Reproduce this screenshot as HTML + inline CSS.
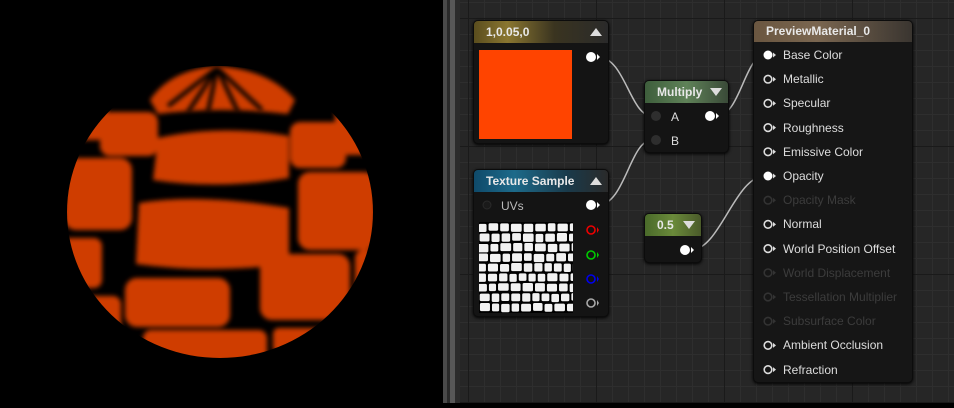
<!DOCTYPE html>
<html><head><meta charset="utf-8"><style>
*{margin:0;padding:0;box-sizing:border-box}
body{width:954px;height:403px;overflow:hidden;background:#000;font-family:"Liberation Sans",sans-serif;position:relative}
#vp{position:absolute;left:0;top:0;width:443px;height:403px;background:#000}
#div1{position:absolute;left:443px;top:0;width:4px;height:403px;background:#4a4a4a}
#div2{position:absolute;left:447px;top:0;width:3px;height:403px;background:#2a2a2a}
#div3{position:absolute;left:450px;top:0;width:5px;height:403px;background:#585858}
#div4{position:absolute;left:455px;top:0;width:5px;height:403px;background:#2c2c2c}
#graph{position:absolute;left:460px;top:0;width:494px;height:403px;background-color:#262626;
background-image:linear-gradient(#1a1a1a 1px,transparent 1px),linear-gradient(90deg,#1a1a1a 1px,transparent 1px),linear-gradient(#2e2e2e 1px,transparent 1px),linear-gradient(90deg,#2e2e2e 1px,transparent 1px);
background-size:128px 128px,128px 128px,16px 16px,16px 16px;background-position:0 18px,8px 0,0 2px,8px 0}
.node{position:absolute;background:#141414;border-radius:5px;box-shadow:0 1px 3px #000;border:1px solid #0c0c0c}
.hd{height:22px;border-radius:4px 4px 0 0;color:#e8e8e8;font-weight:bold;font-size:12px;line-height:22px;padding-left:12px;position:relative}
.tri{position:absolute;right:6px;top:7px;width:0;height:0;border-left:6px solid transparent;border-right:6px solid transparent}
.up{border-bottom:8px solid #ddd}
.dn{border-top:8px solid #ddd}
.lbl{position:absolute;font-size:12px;color:#ddd;line-height:14px;white-space:nowrap}
.dim{color:#3c3c3c}
</style></head><body>
<div id="vp">
<svg width="443" height="403">
<defs>
<clipPath id="sp"><ellipse cx="220" cy="212" rx="153" ry="146"/></clipPath>
<filter id="bl" filterUnits="userSpaceOnUse" x="0" y="0" width="443" height="403"><feGaussianBlur stdDeviation="2.5"/></filter>
</defs>
<ellipse cx="220" cy="212" rx="153" ry="146" fill="#000"/>
<g clip-path="url(#sp)">
<g filter="url(#bl)" fill="#cf3d00">
<path d="M150 100 Q170 70 217 66 Q270 70 295 100 L288 114 Q220 106 158 114Z"/>
<rect x="100" y="112" width="58" height="44" rx="10"/>
<rect x="62" y="95" width="45" height="45" rx="10"/>
<rect x="290" y="122" width="56" height="46" rx="10"/>
<rect x="335" y="105" width="45" height="50" rx="10"/>
<path d="M158 138 Q220 124 289 136 L289 178 Q220 190 153 180Z" />
<rect x="64" y="158" width="68" height="72" rx="12"/>
<path d="M139 203 Q200 193 289 208 L289 264 Q210 274 136 264Z"/>
<rect x="298" y="172" width="78" height="78" rx="12"/>
<rect x="62" y="238" width="40" height="50" rx="8"/>
<rect x="125" y="278" width="105" height="49" rx="12"/>
<rect x="260" y="254" width="90" height="66" rx="12"/>
<rect x="355" y="250" width="25" height="50" rx="8"/>
<rect x="143" y="330" width="124" height="32" rx="8"/>
<rect x="273" y="328" width="70" height="25" rx="6"/>
<rect x="73" y="296" width="48" height="38" rx="8"/>
</g>
<g stroke="#000" stroke-width="4" filter="url(#bl)">
<path d="M217 68 L188 112 M217 68 L208 112 M217 68 L238 112 M217 68 L262 110 M217 68 L168 106"/>
</g>
</g>
</svg>
</div>
<div id="div1"></div><div id="div2"></div><div id="div3"></div><div id="div4"></div>
<div id="graph"></div>

<svg style="position:absolute;left:0;top:0" width="954" height="403">
<g stroke="#bbb" stroke-width="1.5" fill="none">
<path d="M598 57 C625 57 630 116 652 116"/>
<path d="M598 205 C625 205 630 140 652 140"/>
<path d="M717 116 C740 116 745 55 765 55"/>
<path d="M691 250 C720 250 735 176 765 176"/>
</g>
</svg>

<div class="node" style="left:473px;top:20px;width:136px;height:124px">
<div class="hd" style="background:linear-gradient(90deg,#5a4d1e,#8a7630 25%,#3a3420 60%,#2a2a2a)">1,0.05,0<div class="tri up"></div></div>
<div style="position:absolute;left:5px;top:29px;width:93px;height:89px;background:#ff4400"></div>
</div>
<div class="node" style="left:473px;top:169px;width:136px;height:148px">
<div class="hd" style="background:linear-gradient(90deg,#0f4a6a,#1d6a8a 30%,#1a3a4a 70%,#2a2a2a)">Texture Sample<div class="tri up"></div></div>
<div class="lbl" style="left:27px;top:29px;color:#bbb">UVs</div>
<svg style="position:absolute;left:5px;top:52px" width="94" height="91" id="tex"></svg>
</div>
<div class="node" style="left:644px;top:80px;width:85px;height:73px">
<div class="hd" style="background:linear-gradient(90deg,#3e5e3c,#5f8258 50%,#3a4a38)">Multiply<div class="tri dn"></div></div>
<div class="lbl" style="left:26px;top:29px">A</div>
<div class="lbl" style="left:26px;top:53px">B</div>
</div>
<div class="node" style="left:644px;top:213px;width:58px;height:50px">
<div class="hd" style="background:linear-gradient(90deg,#4a6a2a,#6a8a3a 50%,#4a5a2a)">0.5<div class="tri dn"></div></div>
</div>
<div class="node" style="left:753px;top:20px;width:160px;height:363px;background:#161616">
<div class="hd" style="background:linear-gradient(90deg,#6a5640,#7a6650 40%,#3a3530);height:21px;line-height:21px">PreviewMaterial_0</div>
</div>
<div id="labels"></div>

<svg style="position:absolute;left:0;top:0" width="954" height="403" id="pins">
<g fill="#fff">
<circle cx="591" cy="57" r="5"/><path d="M597 54 L600 57 L597 60Z"/>
<circle cx="591" cy="205" r="5"/><path d="M597 202 L600 205 L597 208Z"/>
<circle cx="710" cy="116" r="5"/><path d="M716 113 L719 116 L716 119Z"/>
<circle cx="685" cy="250" r="5"/><path d="M691 247 L694 250 L691 253Z"/>
</g>
<g fill="#2e2e2e"><circle cx="656" cy="116" r="5"/><circle cx="656" cy="140" r="5"/><circle cx="487" cy="205" r="4" fill="#1a1a1a" stroke="#2a2a2a"/></g>
<g fill="none" stroke-width="1.6">
<circle cx="591" cy="230" r="4" stroke="#e00"/><circle cx="591" cy="255" r="4" stroke="#0c0"/><circle cx="591" cy="279" r="4" stroke="#00e"/><circle cx="591" cy="303" r="4" stroke="#aaa"/>
</g>
<g><path d="M597 227 L599 230 L597 233Z" fill="#e00"/><path d="M597 252 L599 255 L597 258Z" fill="#0c0"/><path d="M597 276 L599 279 L597 282Z" fill="#00e"/><path d="M597 300 L599 303 L597 306Z" fill="#aaa"/></g>
</svg>

<script>
var names=["Base Color","Metallic","Specular","Roughness","Emissive Color","Opacity","Opacity Mask","Normal","World Position Offset","World Displacement","Tessellation Multiplier","Subsurface Color","Ambient Occlusion","Refraction"];
var dim=[6,9,10,11],filled=[0,5];
var L=document.getElementById('labels'),P=document.getElementById('pins'),h='',s='';
names.forEach(function(n,i){var y=55+i*24.2;var d=dim.indexOf(i)>=0;
h+='<div class="lbl'+(d?' dim':'')+'" style="left:783px;top:'+(y-7)+'px">'+n+'</div>';
var c=d?'#333':'#ddd';
if(filled.indexOf(i)>=0)s+='<circle cx="768" cy="'+y+'" r="4.5" fill="#fff"/>';
else s+='<circle cx="768" cy="'+y+'" r="3.8" fill="none" stroke="'+c+'" stroke-width="1.6"/>';
s+='<path d="M773 '+(y-2.5)+' L776 '+y+' L773 '+(y+2.5)+'Z" fill="'+c+'"/>';});
L.innerHTML=h;P.innerHTML+=s;
var T=document.getElementById('tex'),t='<rect width="94" height="91" fill="#000"/>';
var seed=3;function r(){seed=(seed*9301+49297)%233280;return seed/233280;}
for(var row=0;row<9;row++){var x=-r()*4;while(x<94){var w=9+r()*4;t+='<rect x="'+(x+1)+'" y="'+(row*10+1+r()*1)+'" width="'+(w-2)+'" height="'+(8.5-r()*1)+'" rx="1.5" fill="#f2f2f2"/>';x+=w;}}
T.innerHTML=t;
</script>
</body></html>
